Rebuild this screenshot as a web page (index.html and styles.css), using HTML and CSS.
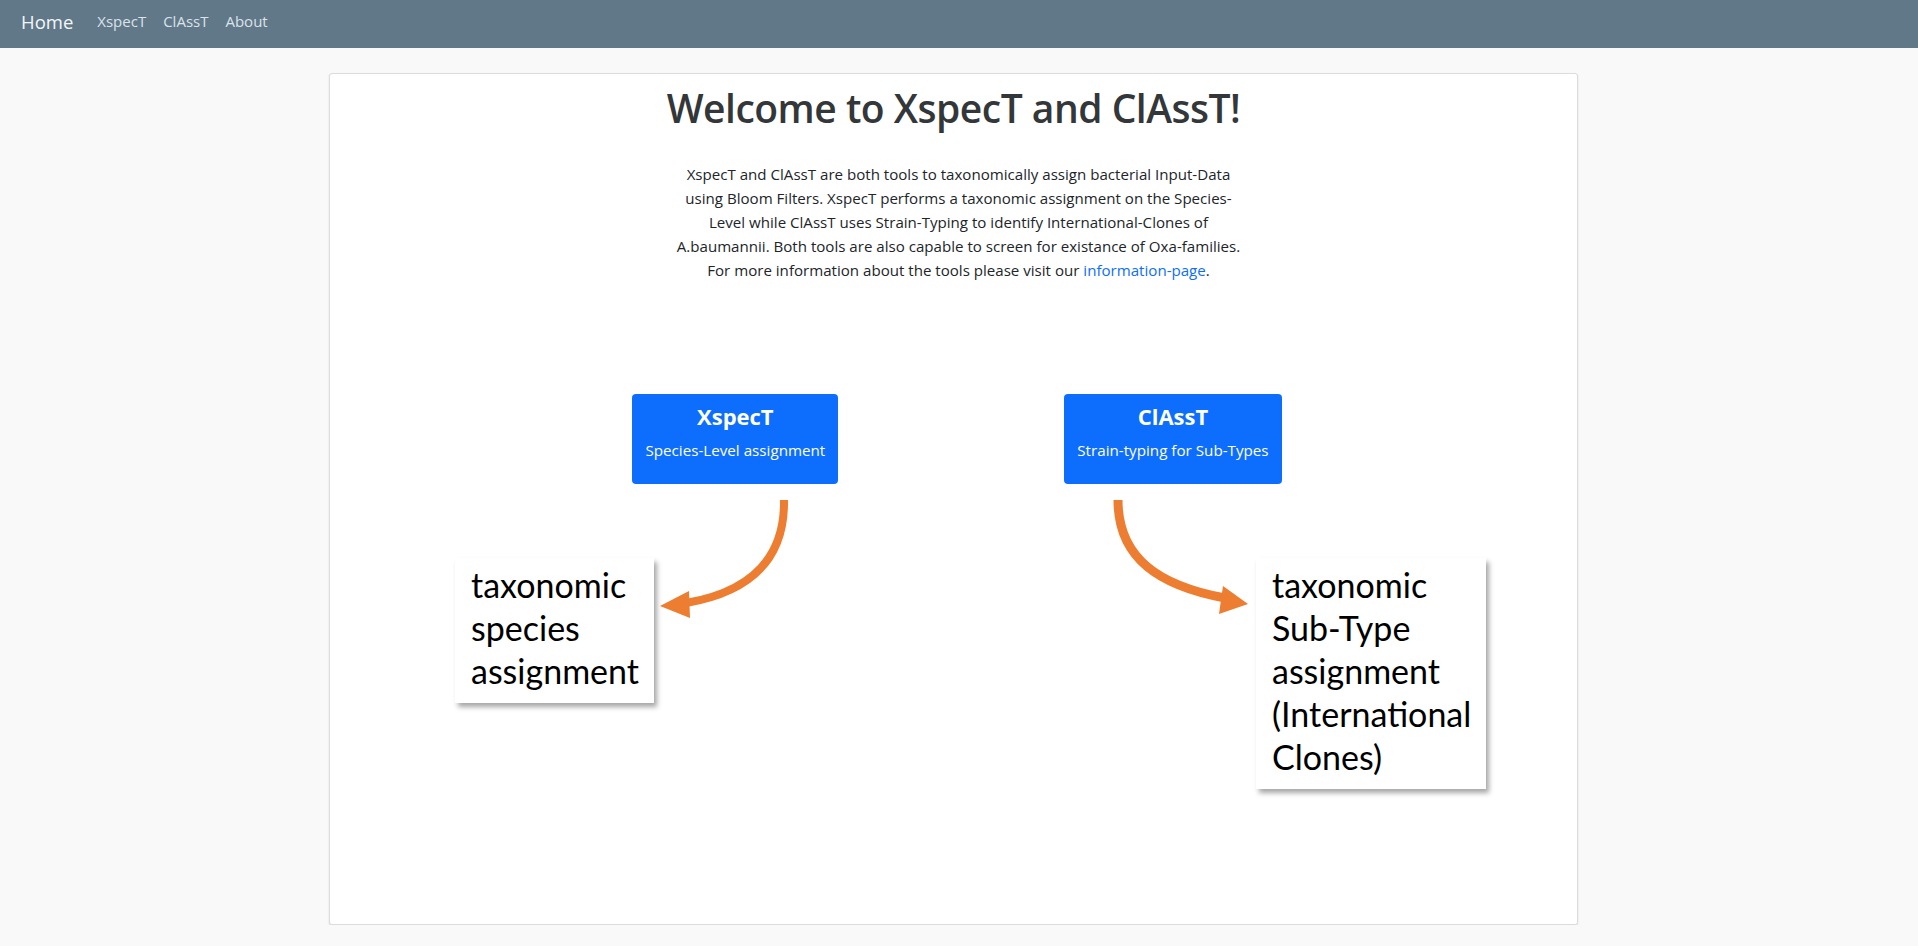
FILE: index.html
```html
<!DOCTYPE html>
<html lang="en">
<head>
<meta charset="utf-8">
<title>XspecT and ClAssT</title>
<link rel="stylesheet" href="styles.css">
</head>
<body>
<nav class="navbar">
  <a class="brand" href="#">Home</a>
  <ul class="nav-links">
    <li><a href="#">XspecT</a></li>
    <li><a href="#">ClAssT</a></li>
    <li><a href="#">About</a></li>
  </ul>
</nav>
<main class="page">
  <section class="card">
    <h1 class="title">Welcome to XspecT and ClAssT!</h1>
    <p class="intro">XspecT and ClAssT are both tools to taxonomically assign bacterial Input-Data<br>using Bloom Filters. XspecT performs a taxonomic assignment on the Species-<br>Level while ClAssT uses Strain-Typing to identify International-Clones of<br>A.baumannii. Both tools are also capable to screen for existance of Oxa-families.<br>For more information about the tools please visit our <a href="#">information-page</a>.</p>
    <div class="diagram">
      <div class="tool-row">
        <a class="tool-btn" href="#">
          <span class="tool-name">XspecT</span>
          <span class="tool-desc">Species-Level assignment</span>
        </a>
        <a class="tool-btn" href="#">
          <span class="tool-name">ClAssT</span>
          <span class="tool-desc">Strain-typing for Sub-Types</span>
        </a>
      </div>
      <svg class="arrows" width="1247" height="420" viewBox="0 0 1247 420" aria-hidden="true">
        <path d="M 454 106 C 455 165, 420 198, 356 209" fill="none" stroke="#ED7D31" stroke-width="8"/>
        <polygon points="330,212 359,197 360,224" fill="#ED7D31"/>
        <path d="M 788 106 C 788 165, 830 192, 895 204" fill="none" stroke="#ED7D31" stroke-width="9"/>
        <polygon points="918,210 893,192 889,220" fill="#ED7D31"/>
      </svg>
      <div class="callout callout-left">taxonomic<br>species<br>assignment</div>
      <div class="callout callout-right">taxonomic<br>Sub-Type<br>assignment<br>(International<br>Clones)</div>
    </div>
  </section>
</main>
</body>
</html>
```
FILE: styles.css
```css
* { box-sizing: border-box; }

html, body {
  margin: 0;
  padding: 0;
}

body {
  background: #f9f9f9;
  font-family: "Open Sans", "Noto Sans", sans-serif;
  color: #212529;
}

a { text-decoration: none; }

.navbar {
  height: 48px;
  background: #617889;
  display: flex;
  align-items: center;
  padding: 0 0 4px 21px;
}

.brand {
  color: #f3f6f8;
  font-size: 18.5px;
  line-height: 24px;
  margin-right: 24px;
}

.nav-links {
  list-style: none;
  display: flex;
  gap: 17px;
  margin: 0;
  padding: 0 0 2px;
}

.nav-links a {
  color: #dbe2e8;
  font-size: 15px;
  line-height: 22px;
}

.page {
  padding-top: 25px;
}

.card {
  width: 1249px;
  height: 852px;
  margin-left: 329px;
  background: #fff;
  border: 1px solid #dcdcdc;
  border-radius: 3px;
  box-shadow: 0 1px 2px rgba(0, 0, 0, 0.12);
  padding-top: 10px;
}

.title {
  margin: 0;
  text-align: center;
  font-size: 39px;
  line-height: 48px;
  font-weight: 600;
  letter-spacing: -0.5px;
  color: #343739;
}

.intro {
  margin: 30px auto 0;
  width: 620px;
  padding-left: 10px;
  text-align: center;
  font-size: 15.1px;
  line-height: 24px;
  white-space: nowrap;
  color: #212529;
}

.intro a { color: #0d6efd; }

.diagram {
  position: relative;
  margin-top: 112px;
  height: 420px;
}

.tool-row {
  display: flex;
  justify-content: center;
  gap: 226px;
  padding-left: 7px;
}

.tool-btn {
  display: flex;
  flex-direction: column;
  align-items: center;
  height: 90px;
  padding: 9px 13px 0;
  background: #0d6efd;
  border-radius: 4px;
  color: #fff;
}

.tool-name {
  font-size: 22px;
  line-height: 26px;
  font-weight: 700;
}

.tool-desc {
  margin-top: 10px;
  font-size: 15.2px;
  line-height: 22px;
}

.arrows {
  position: absolute;
  left: 0;
  top: 0;
  pointer-events: none;
}

.callout {
  position: absolute;
  top: 164px;
  background: #fff;
  box-shadow: 3px 4px 5px rgba(0, 0, 0, 0.35);
  font-family: "Lato", "Open Sans", sans-serif;
  font-size: 34px;
  line-height: 43px;
  color: #000;
  padding: 5px 0 0 16px;
}

.callout-left {
  left: 125px;
  width: 199px;
  height: 145px;
}

.callout-right {
  left: 926px;
  width: 230px;
  height: 231px;
}
```
